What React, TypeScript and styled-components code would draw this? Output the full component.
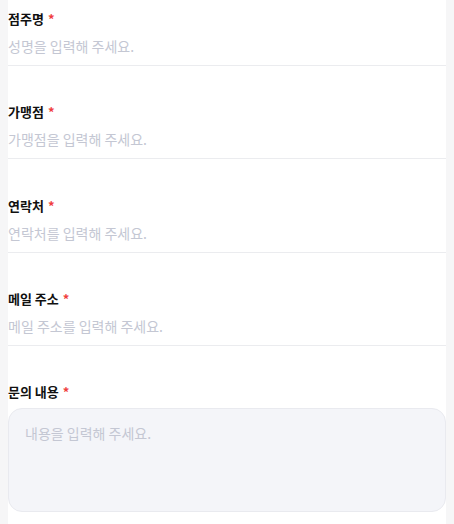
import styled, { createGlobalStyle } from 'styled-components';

const GlobalStyle = createGlobalStyle`
  html, body {
    margin: 0;
    padding: 0;
    background: #f6f6f7;
  }
  * {
    box-sizing: border-box;
  }
`;

const Page = styled.div`
  margin: 0 8px;
  min-height: 524px;
  background: #ffffff;
  padding-top: 9px;
  font-family: 'Noto Sans CJK KR', 'Noto Sans', sans-serif;
`;

const Form = styled.form`
  display: flex;
  flex-direction: column;
`;

const Field = styled.div<{ $last?: boolean }>`
  display: flex;
  flex-direction: column;
  margin-bottom: ${(p) => (p.$last ? '0' : '36.33px')};
`;

const Label = styled.label<{ $gap?: number }>`
  font-size: 13px;
  font-weight: 700;
  line-height: 20px;
  color: #111111;
  margin-bottom: ${(p) => p.$gap ?? 1}px;
`;

const Required = styled.span`
  color: #f03e3e;
  margin-left: 4px;
`;

const Input = styled.input`
  height: 36px;
  border: none;
  border-bottom: 1px solid #ebecef;
  padding: 0 0 3px;
  font-family: inherit;
  font-size: 14px;
  color: #111111;
  background: transparent;
  outline: none;

  &::placeholder {
    color: #c4c7d3;
  }
`;

const TextArea = styled.textarea`
  height: 104px;
  border: 1px solid #e9eaef;
  border-radius: 14px;
  background: #f4f5f9;
  padding: 14px 16px;
  font-family: inherit;
  font-size: 14px;
  line-height: 20px;
  color: #111111;
  resize: none;
  outline: none;

  &::placeholder {
    color: #c4c7d3;
  }
`;

const fields = [
  { label: '점주명', placeholder: '성명을 입력해 주세요.' },
  { label: '가맹점', placeholder: '가맹점을 입력해 주세요.' },
  { label: '연락처', placeholder: '연락처를 입력해 주세요.' },
  { label: '메일 주소', placeholder: '메일 주소를 입력해 주세요.' }
];

function App() {
  return (
    <>
      <GlobalStyle />
      <Page>
        <Form onSubmit={(e) => e.preventDefault()}>
          {fields.map((f) => (
            <Field key={f.label}>
              <Label>
                {f.label}
                <Required>*</Required>
              </Label>
              <Input type="text" placeholder={f.placeholder} />
            </Field>
          ))}
          <Field $last>
            <Label $gap={6}>
              문의 내용
              <Required>*</Required>
            </Label>
            <TextArea placeholder="내용을 입력해 주세요." />
          </Field>
        </Form>
      </Page>
    </>
  );
}

export default App;
